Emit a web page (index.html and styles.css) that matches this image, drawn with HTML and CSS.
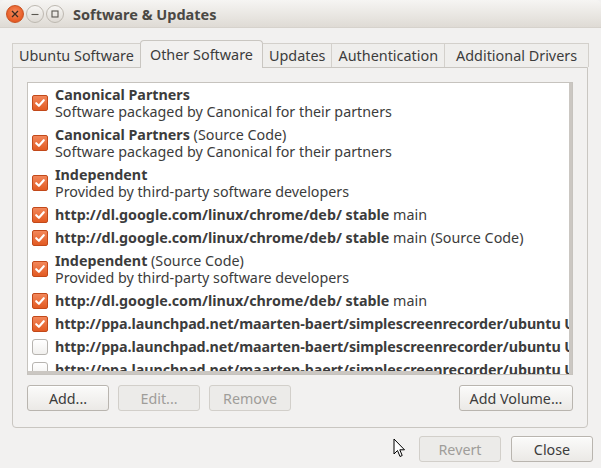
FILE: index.html
```html
<!DOCTYPE html>
<html>
<head>
<meta charset="utf-8">
<link rel="stylesheet" href="styles.css">
</head>
<body>
<div class="window">
  <header class="titlebar">
    <div class="wm-buttons">
      <span class="wm-btn wm-close"><svg width="8" height="8" viewBox="0 0 8 8"><path d="M1 1L7 7M7 1L1 7" stroke="#3a2a20" stroke-width="1.3"/></svg></span>
      <span class="wm-btn"><svg width="8" height="8" viewBox="0 0 8 8"><path d="M0.5 4.5H7.5" stroke="#5a5750" stroke-width="1.1"/></svg></span>
      <span class="wm-btn"><svg width="8" height="8" viewBox="0 0 8 8"><rect x="1" y="1" width="6" height="6" fill="none" stroke="#5a5750" stroke-width="1.1"/></svg></span>
    </div>
    <span class="title">Software &amp; Updates</span>
  </header>
  <main class="content">
    <div class="notebook">
      <nav class="tabs">
        <span class="tab">Ubuntu Software</span>
        <span class="tab active">Other Software</span>
        <span class="tab">Updates</span>
        <span class="tab">Authentication</span>
        <span class="tab">Additional Drivers</span>
      </nav>
      <section class="page">
        <div class="list">
          <div class="row"><span class="check on"></span><div class="label"><div><b>Canonical Partners</b></div><div>Software packaged by Canonical for their partners</div></div></div>
          <div class="row"><span class="check on"></span><div class="label"><div><b>Canonical Partners</b> (Source Code)</div><div>Software packaged by Canonical for their partners</div></div></div>
          <div class="row"><span class="check on"></span><div class="label"><div><b>Independent</b></div><div>Provided by third-party software developers</div></div></div>
          <div class="row"><span class="check on"></span><div class="label"><b>http://dl.google.com/linux/chrome/deb/ stable</b> main</div></div>
          <div class="row"><span class="check on"></span><div class="label"><b>http://dl.google.com/linux/chrome/deb/ stable</b> main (Source Code)</div></div>
          <div class="row"><span class="check on"></span><div class="label"><div><b>Independent</b> (Source Code)</div><div>Provided by third-party software developers</div></div></div>
          <div class="row"><span class="check on"></span><div class="label"><b>http://dl.google.com/linux/chrome/deb/ stable</b> main</div></div>
          <div class="row"><span class="check on"></span><div class="label"><b class="url">http://ppa.launchpad.net/maarten-baert/simplescreenrecorder/ubuntu Ubuntu</b></div></div>
          <div class="row"><span class="check"></span><div class="label"><b class="url">http://ppa.launchpad.net/maarten-baert/simplescreenrecorder/ubuntu Ubuntu</b></div></div>
          <div class="row"><span class="check"></span><div class="label"><b class="url">http://ppa.launchpad.net/maarten-baert/simplescreenrecorder/ubuntu Ubuntu</b></div></div>
          <div class="vscroll"></div>
          <div class="hscroll"></div>
        </div>
        <div class="list-actions">
          <button class="btn">Add...</button>
          <button class="btn" disabled>Edit...</button>
          <button class="btn" disabled>Remove</button>
          <span class="spacer"></span>
          <button class="btn wide">Add Volume...</button>
        </div>
      </section>
    </div>
    <div class="dialog-actions">
      <button class="btn" disabled>Revert</button>
      <button class="btn">Close</button>
    </div>
  </main>
  <svg class="cursor" width="13" height="20" viewBox="0 0 13 20"><path d="M1 1V16L4.5 12.5L7 18.5L9.2 17.5L6.8 11.8H11.5Z" fill="#fff" stroke="#000" stroke-width="1" stroke-linejoin="round"/></svg>
</div>
</body>
</html>
```
FILE: styles.css
```css
* { box-sizing: border-box; }
html, body { margin: 0; padding: 0; }
body {
  background: #f2f1f0;
  font-family: "Noto Sans", "DejaVu Sans", sans-serif;
  font-size: 14.3px;
  color: #3c3c3c;
}
.window {
  position: relative;
  width: 601px;
  height: 468px;
  overflow: hidden;
  background: #f2f1f0;
}
.titlebar {
  height: 28px;
  display: flex;
  align-items: center;
  padding-left: 6px;
  background: linear-gradient(#f6f5f3, #dfdbd5);
  border-radius: 5px 5px 0 0;
  border-bottom: 1px solid #d6d2cc;
}
.wm-buttons { display: flex; gap: 2px; }
.wm-btn {
  width: 18px;
  height: 18px;
  border-radius: 50%;
  border: 1px solid #bdb8b0;
  background: linear-gradient(#f7f6f4, #dedad4);
  display: flex;
  align-items: center;
  justify-content: center;
}
.wm-close {
  border-color: #c8501f;
  background: radial-gradient(circle at 50% 40%, #f88d5f, #e65b24 70%);
}
.title {
  margin-left: 9px;
  font-weight: bold;
  font-size: 14.5px;
  color: #4a4844;
}
.content {
  padding: 12px 13px 0 12px;
}
.notebook { display: flex; flex-direction: column; }
.tabs {
  display: flex;
  align-items: flex-end;
  height: 27px;
  position: relative;
  z-index: 1;
}
.tab {
  flex: none;
  height: 24px;
  padding: 0 6px;
  display: flex;
  align-items: center;
  justify-content: center;
  font-size: 14.4px;
  border: 1px solid #d3d0cb;
  border-bottom: none;
  border-right: none;
  background: #efeeec;
  color: #3c3c3c;
  white-space: nowrap;
}
.tab:last-child { border-right: 1px solid #d3d0cb; }
.tab.active {
  height: 28px;
  padding: 0 9px 1px;
  background: #f2f1f0;
  border: 1px solid #c9c6c1;
  border-bottom: none;
  border-radius: 4px 4px 0 0;
  margin-bottom: -1px;
}
.tab.active + .tab { border-left: none; }
.tabs .tab:last-child { padding: 0 11px; }
.page {
  border: 1px solid #c9c6c1;
  border-radius: 0 0 4px 4px;
  padding: 14px 14px 15px 14px;
  height: 361px;
  display: flex;
  flex-direction: column;
}
.list {
  position: relative;
  height: 293px;
  border: 1px solid #c6c3be;
  background: #ffffff;
  overflow: hidden;
  padding-left: 4px;
}
.row {
  display: flex;
  align-items: center;
  gap: 7px;
  padding: 3px 0;
  line-height: 17px;
  white-space: nowrap;
}
.label b { font-weight: bold; }
.label b.url { letter-spacing: -0.07px; }
.check {
  flex: none;
  width: 16px;
  height: 16px;
  border: 1px solid #b7b4b0;
  border-radius: 3px;
  background: linear-gradient(#ffffff, #f1f0ee);
}
.check.on {
  border-color: #c2491a;
  border-radius: 2px;
  background:
    url("data:image/svg+xml;utf8,<svg xmlns='http://www.w3.org/2000/svg' width='14' height='14' viewBox='0 0 14 14'><path d='M3.2 7.2L5.9 9.8L10.8 4.2' fill='none' stroke='white' stroke-width='2.1' stroke-linecap='round' stroke-linejoin='round'/></svg>") center/14px 14px no-repeat,
    linear-gradient(#f2875a, #e25a22);
}
.vscroll {
  position: absolute;
  right: 0;
  top: 0;
  bottom: 0;
  width: 3px;
  background: #cbc7c2;
}
.hscroll {
  position: absolute;
  left: 0;
  bottom: 0;
  width: 411px;
  height: 3px;
  background: #cbc7c2;
}
.list-actions {
  display: flex;
  gap: 9px;
  margin-top: 10px;
}
.spacer { flex: 1; }
.btn {
  height: 26px;
  width: 82px;
  padding: 0 8px;
  font-family: inherit;
  font-size: 14.3px;
  color: #3c3c3c;
  border: 1px solid #b9b5af;
  border-radius: 3px;
  background: linear-gradient(#fbfbfa, #ebe9e6);
  box-shadow: inset 0 1px 0 #ffffff;
}
.btn.wide { width: 114px; }
.btn:disabled {
  color: #9f9d99;
  border-color: #d2cfca;
  background: #ecebe9;
  box-shadow: none;
}
.dialog-actions {
  display: flex;
  justify-content: flex-end;
  gap: 10px;
  margin-top: 8px;
  margin-right: -5px;
}
.cursor {
  position: absolute;
  left: 393px;
  top: 438px;
}
```
